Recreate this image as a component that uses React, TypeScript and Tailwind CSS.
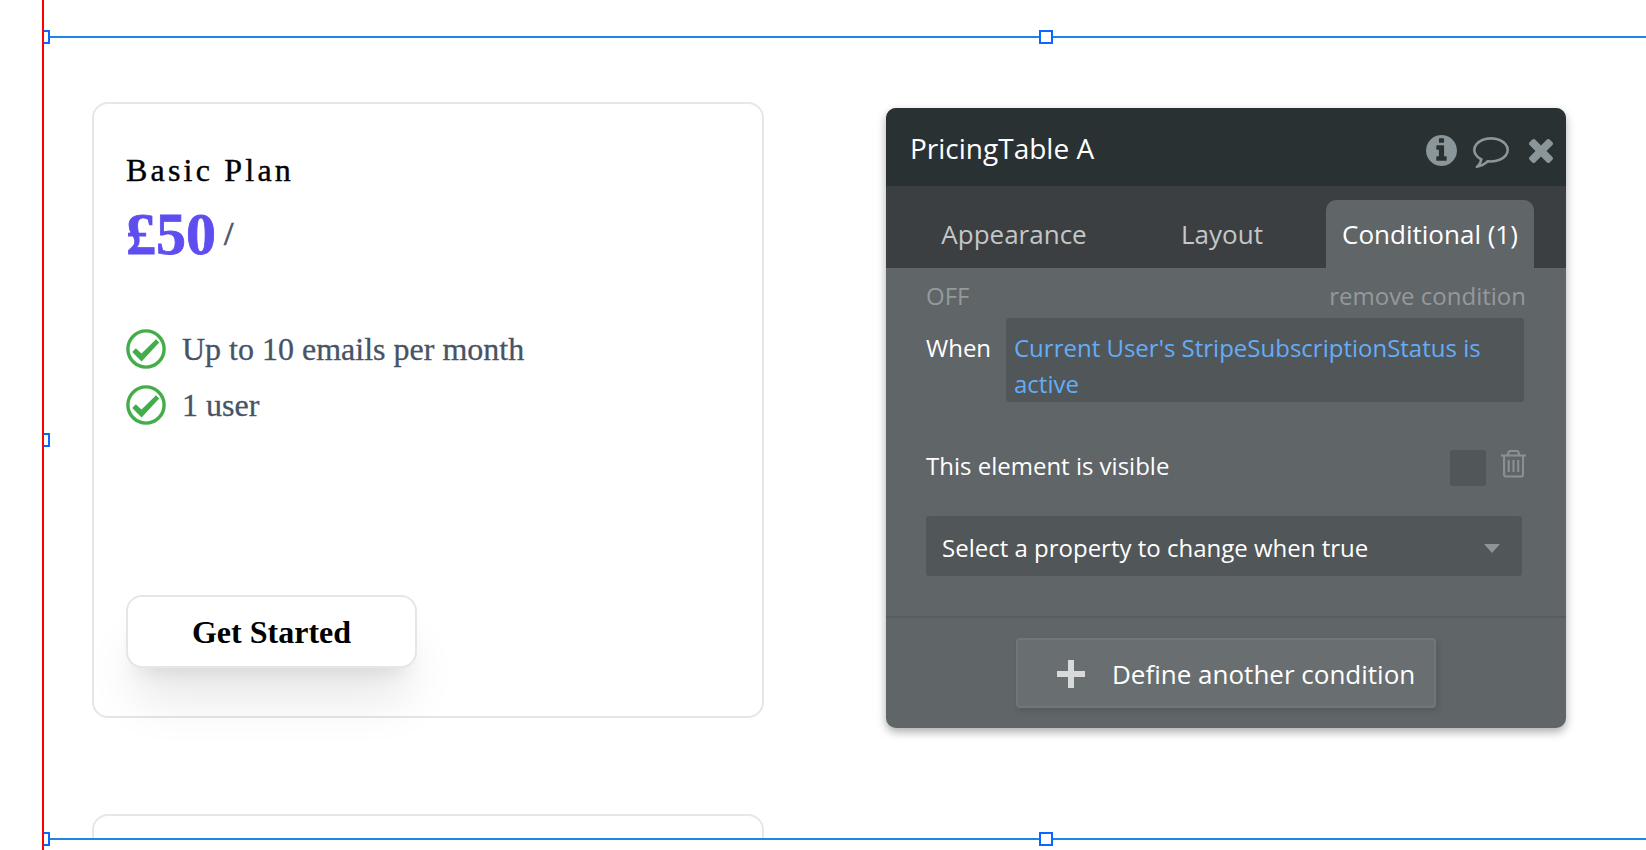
import React from "react";

const SANS = "font-['Open_Sans','Noto_Sans',sans-serif]";
const SERIF = "font-['Liberation_Serif','Times_New_Roman',serif]";

function CheckIcon() {
  return (
    <svg className="size-10 shrink-0" viewBox="0 0 40 40">
      <circle cx="20" cy="20" r="18.1" fill="none" stroke="#43ad4a" strokeWidth="3.4" />
      <path d="M6.200 23l3.600-3.700 5.700 5.200L30 10.200l3.200 3.200L15.600 32.400z" fill="#43ad4a" />
    </svg>
  );
}

function InfoIcon() {
  return (
    <svg className="h-[31px] w-[31px]" viewBox="128 128 1536 1536" fill="#8b969a">
      <path d="M1152 1376v-160q0-14-9-23t-23-9h-96v-512q0-14-9-23t-23-9h-320q-14 0-23 9t-9 23v160q0 14 9 23t23 9h96v320h-96q-14 0-23 9t-9 23v160q0 14 9 23t23 9h448q14 0 23-9t9-23zm-128-896v-160q0-14-9-23t-23-9h-192q-14 0-23 9t-9 23v160q0 14 9 23t23 9h192q14 0 23-9t9-23zm640 416q0 209-103 385.5t-279.5 279.5-385.5 103-385.5-103-279.5-279.5-103-385.5 103-385.5 279.5-279.5 385.5-103 385.5 103 279.5 279.5 103 385.5z" />
    </svg>
  );
}

function CommentIcon() {
  return (
    <svg className="h-[31px] w-9" viewBox="0 256 1792 1536" fill="#8b969a">
      <path d="M896 384q-204 0-381.5 69.5t-282 187.5-104.5 255q0 112 71.5 213.5t201.5 175.5l87 50-27 96q-24 91-70 172 152-63 275-171l43-38 57 6q69 8 130 8 204 0 381.5-69.5t282-187.5 104.5-255-104.5-255-282-187.5-381.5-69.5zm896 512q0 174-120 321.5t-326 233-450 85.5q-70 0-145-8-198 175-460 242-49 14-114 22h-5q-15 0-27-10.5t-16-27.5v-1q-3-4-.5-12t2-10 4.5-9.5l6-9 7-8.5 8-9q7-8 31-34.5t34.5-38 31-39.5 32.5-51 27-59 26-76q-157-89-247.5-220t-90.5-281q0-174 120-321.5t326-233 450-85.5 450 85.5 326 233 120 321.5z" />
    </svg>
  );
}

function CloseIcon() {
  return (
    <svg className="size-6" viewBox="302 366 1188 1188" fill="#8b969a">
      <path d="M1490 1322q0 40-28 68l-136 136q-28 28-68 28t-68-28l-294-294-294 294q-28 28-68 28t-68-28l-136-136q-28-28-28-68t28-68l294-294-294-294q-28-28-28-68t28-68l136-136q28-28 68-28t68 28l294 294 294-294q28-28 68-28t68 28l136 136q28 28 28 68t-28 68l-294 294 294 294q28 28 28 68z" />
    </svg>
  );
}

function TrashIcon() {
  return (
    <svg className="h-7 w-[25px]" viewBox="0 0 25 28" fill="none" stroke="#8b9092" strokeWidth="2.1">
      <path d="M0 5.5h25" />
      <path d="M7 5.5c0-3 .8-4.500 2.500-4.500h6c1.700 0 2.500 1.500 2.500 4.500" />
      <path d="M3 5.500v18.700q0 2.300 2.300 2.300h14.400q2.300 0 2.300-2.300V5.500" />
      <path d="M7.700 10v12M12.500 10v12M17.200 10v12" />
    </svg>
  );
}

function Feature({ label }: { label: string }) {
  return (
    <li className="flex h-10 items-center gap-4 text-[32px] leading-10 whitespace-nowrap text-[#475366] [-webkit-text-stroke:0.3px]">
      <CheckIcon />
      <span>{label}</span>
    </li>
  );
}

function PricingCard() {
  return (
    <section className={`flex h-[616px] w-[672px] flex-col items-start rounded-2xl border-2 border-[#e5e5eb] px-8 pt-[46px] ${SERIF}`}>
      <h2 className="text-[32px] leading-10 tracking-[3.2px] whitespace-nowrap text-black [-webkit-text-stroke:0.4px]">Basic Plan</h2>
      <div className="mt-[14px] flex h-[60px] items-center text-[#5f4eef]">
        <span className="text-[60px] leading-[60px] font-bold [-webkit-text-stroke:0.8px]">£50</span>
        <span className="ml-2 text-[34px] leading-[56px] text-[#475366] [-webkit-text-stroke:0.7px]">/</span>
      </div>
      <ul className="mt-[65px] flex flex-col gap-4">
        <Feature label="Up to 10 emails per month" />
        <Feature label="1 user" />
      </ul>
      <button className="mt-[170px] h-[73px] w-[291px] shrink-0 rounded-2xl border-2 border-[#e5e5eb] bg-white text-[32px] leading-10 font-bold text-black shadow-[0_40px_50px_-10px_rgba(0,0,0,0.1),0_16px_20px_-12px_rgba(0,0,0,0.1)]">
        Get Started
      </button>
    </section>
  );
}

function PropertyPanel() {
  return (
    <aside className={`flex h-[620px] w-[680px] flex-col overflow-hidden rounded-[10px] bg-[#606568] text-white shadow-[0_4px_10px_rgba(0,0,0,0.33)] ${SANS}`}>
      <header className="flex h-[78px] shrink-0 items-start bg-[#293133] pr-[13px] pl-6">
        <h1 className="mt-[21px] flex-1 text-[28px] leading-[38px] whitespace-nowrap">PricingTable A</h1>
        <div className="flex items-start">
          <div className="mt-[27px]"><InfoIcon /></div>
          <div className="mt-[29px] ml-4"><CommentIcon /></div>
          <div className="mt-[31px] ml-5"><CloseIcon /></div>
        </div>
      </header>
      <nav className="flex h-[82px] shrink-0 items-end bg-[#3b3f42] pr-8 text-[26px] leading-9 whitespace-nowrap text-[#c4c6c7]">
        <span className="flex h-[68px] w-[256px] items-center justify-center">Appearance</span>
        <span className="flex h-[68px] w-[160px] items-center justify-center">Layout</span>
        <span className="ml-auto flex h-[68px] w-[208px] items-center justify-center rounded-t-[10px] bg-[#606568] text-white">Conditional (1)</span>
      </nav>
      <div className="flex flex-col pr-[42px] pl-10 text-[24px] leading-9 whitespace-nowrap">
        <div className="mt-[10px] flex h-9 justify-between text-[#94999b]">
          <span>OFF</span>
          <span className="-mr-[2px]">remove condition</span>
        </div>
        <div className="mt-1 flex">
          <span className="w-20 pt-3">When</span>
          <p className="h-[84px] w-[518px] rounded-[3px] bg-[#515658] pt-3 pl-2 text-[#64adf8]">
            Current User's StripeSubscriptionStatus is
            <br />
            active
          </p>
        </div>
        <div className="mt-12 flex h-9 items-start">
          <span className="-mt-[2px] flex-1">This element is visible</span>
          <span className="size-9 rounded-[3px] bg-[#515658]" />
          <span className="-mr-[2px] ml-[15px]"><TrashIcon /></span>
        </div>
        <div className="mt-[30px] flex h-[60px] w-[596px] items-center rounded-[3px] bg-[#515658] pr-[22px] pl-4">
          <span className="mt-[4px] flex-1">Select a property to change when true</span>
          <svg className="mt-[5px] h-[9px] w-4" viewBox="0 0 16 9" fill="#8f9496">
            <path d="M0 0h16L8 9z" />
          </svg>
        </div>
      </div>
      <footer className="mt-10 flex flex-1 justify-center border-t-2 border-[#575c5f] pt-5">
        <button className="flex h-[70px] w-[420px] items-center rounded-[4px] border-2 border-[#70767a] bg-[#696f71] pl-[39px] text-[26px] leading-9 whitespace-nowrap shadow-[2px_3px_6px_rgba(0,0,0,0.12)]">
          <svg className="mt-[2px] size-7" viewBox="0 0 28 28" fill="#d8d9da">
            <path d="M11 0h6v11h11v6H17v11h-6V17H0v-6h11z" />
          </svg>
          <span className="mt-[2px] ml-[27px]">Define another condition</span>
        </button>
      </footer>
    </aside>
  );
}

function Handle({ className }: { className: string }) {
  return <span className={`absolute size-[14px] border-2 border-[#0d66ff] bg-white ${className}`} />;
}

export default function App() {
  return (
    <main className="relative h-[850px] w-[1646px] overflow-hidden bg-white">
      <div className="flex h-[838px] items-start overflow-hidden pl-[92px]">
        <div className="flex flex-col gap-24 pt-[102px]">
          <PricingCard />
          <section className="h-[616px] w-[672px] rounded-2xl border-2 border-[#e5e5eb]" />
        </div>
        <div className="pt-[108px] pl-[122px]">
          <PropertyPanel />
        </div>
      </div>
      <div className="absolute top-9 left-[43px] h-[804px] w-[1700px] border-y-2 border-[#1c86e2]" />
      <Handle className="top-[30px] left-9" />
      <Handle className="top-[433px] left-9" />
      <Handle className="top-[832px] left-9" />
      <Handle className="top-[30px] left-[1039px]" />
      <Handle className="top-[832px] left-[1039px]" />
      <div className="absolute top-0 left-0 h-full w-11 border-r-2 border-[#ff0000] bg-white" />
    </main>
  );
}
